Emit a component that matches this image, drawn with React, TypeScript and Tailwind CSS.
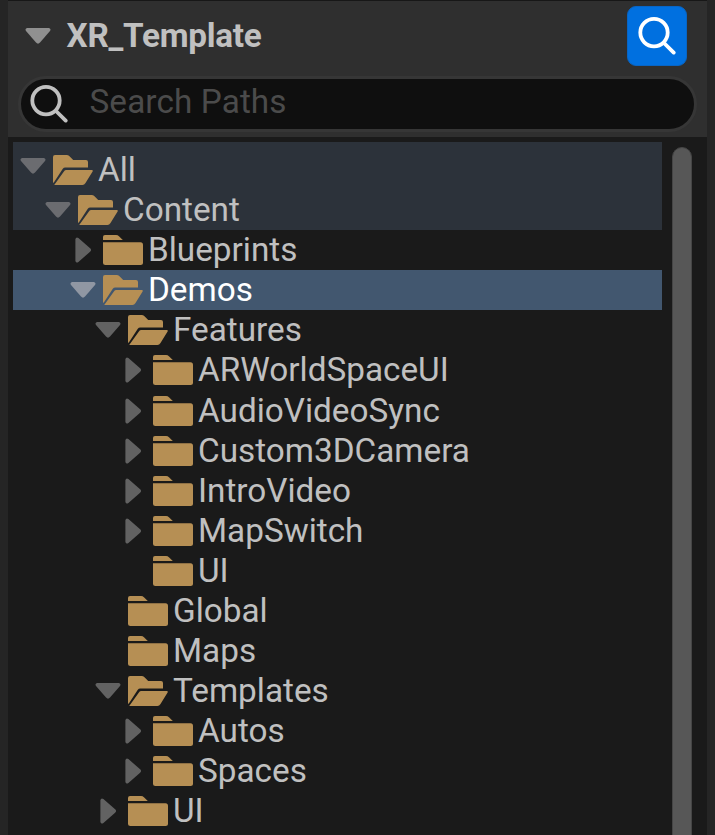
type Kind = 'open' | 'closed' | 'leaf';
type Item = { name: string; level: number; kind: Kind; tone?: 'ancestor' | 'selected'; tall?: boolean };

const items: Item[] = [
  { name: 'All', level: 0, kind: 'open', tone: 'ancestor' },
  { name: 'Content', level: 1, kind: 'open', tone: 'ancestor' },
  { name: 'Blueprints', level: 2, kind: 'closed' },
  { name: 'Demos', level: 2, kind: 'open', tone: 'selected' },
  { name: 'Features', level: 3, kind: 'open' },
  { name: 'ARWorldSpaceUI', level: 4, kind: 'closed' },
  { name: 'AudioVideoSync', level: 4, kind: 'closed', tall: true },
  { name: 'Custom3DCamera', level: 4, kind: 'closed' },
  { name: 'IntroVideo', level: 4, kind: 'closed' },
  { name: 'MapSwitch', level: 4, kind: 'closed' },
  { name: 'UI', level: 4, kind: 'leaf' },
  { name: 'Global', level: 3, kind: 'leaf' },
  { name: 'Maps', level: 3, kind: 'leaf' },
  { name: 'Templates', level: 3, kind: 'open' },
  { name: 'Autos', level: 4, kind: 'closed' },
  { name: 'Spaces', level: 4, kind: 'closed' },
  { name: 'UI', level: 3, kind: 'closed' },
];

function Down({ className }: { className: string }) {
  return (
    <svg className={`h-4 w-[26px] shrink-0 ${className}`} viewBox="0 0 26 16" fill="currentColor">
      <path d="M2 0H24Q26.4 .8 25 3L15 14.5Q13 16.8 11 14.5L1 3Q-.4 .8 2 0Z" />
    </svg>
  );
}

function Right({ className }: { className: string }) {
  return (
    <svg className={`h-[26px] w-4 shrink-0 ${className}`} viewBox="0 0 16 26" fill="currentColor">
      <path d="M.4 2Q1.2-.4 3.4 1L15.1 11.3Q17.1 13 15.1 14.7L3.4 25Q1.2 26.4 .4 24Z" />
    </svg>
  );
}

function Folder({ open }: { open: boolean }) {
  return (
    <svg className="h-[30px] w-10 shrink-0 text-[#b68f54]" viewBox="0 0 40 30" fill="currentColor">
      {open ? (
        <>
          <path d="M0 2Q0 0 2 0H13.5Q15.2 0 16.5 1.3L20.2 5H33Q35 5 35 7V12.4H12.2Q10.7 12.4 9.8 13.7L.5 28Q0 27.5 0 26.5Z" />
          <path d="M13.4 15H38.8Q40.3 15 39.6 16.6L32.5 28Q31.3 30 29.5 30H1.2L10.9 16.4Q11.8 15 13.4 15Z" />
        </>
      ) : (
        <>
          <path d="M0 5V2Q0 0 2 0H13Q14.8 0 16.2 1.4L19.8 5Z" />
          <path d="M0 7.2H37.5Q40 7.2 40 9.7V27.5Q40 30 37.5 30H2.5Q0 30 0 27.5Z" />
        </>
      )}
    </svg>
  );
}

function Magnifier() {
  return (
    <svg className="h-[38px] w-[38px] shrink-0" viewBox="0 0 38 38" fill="none" stroke="currentColor" strokeWidth="3.8" strokeLinecap="round">
      <circle cx="16" cy="15.6" r="13.7" />
      <path d="M26 26L35.7 35.6" />
    </svg>
  );
}

function Row({ item }: { item: Item }) {
  const root = item.level === 0;
  const bg = item.tone === 'ancestor' ? 'bg-[#2c323a]' : item.tone === 'selected' ? 'bg-[#42576f]' : '';
  const arrow = item.tone === 'ancestor' ? 'text-[#6b6c70]' : item.tone === 'selected' ? 'text-[#9097a3]' : 'text-[#626262]';
  const color = item.tone === 'selected' ? 'text-white' : 'text-[#c0c0c0]';
  return (
    <div className={`flex shrink-0 items-center ${root ? 'h-12 pt-2' : item.tall ? 'h-[41px]' : 'h-10'} ${bg}`} style={{ paddingLeft: 7 + item.level * 25 }}>
      <div className={`mr-[7px] flex w-[26px] shrink-0 justify-center ${root ? 'mb-2' : ''}`}>
        {item.kind === 'open' && <Down className={arrow} />}
        {item.kind === 'closed' && <Right className={arrow} />}
      </div>
      <Folder open={item.kind === 'open'} />
      <span className={`pl-[5px] leading-10 ${color}`}>{item.name}</span>
    </div>
  );
}

export default function App() {
  return (
    <main className="flex h-[835px] w-[715px] flex-col overflow-hidden bg-[#252525] px-2 font-['Roboto',sans-serif] text-[33.3px] text-[#c0c0c0]">
      <header className="h-[137px] shrink-0 border-t border-[#171717] bg-[#2f2f2f] px-[10px]">
        <div className="flex h-[75px] items-center pb-[5px]">
          <div className="flex w-[48.5px] pl-[7px]">
            <Down className="text-[#909090]" />
          </div>
          <h1 className="leading-10 font-bold tracking-[-0.25px]">XR_Template</h1>
          <button className="mr-[10px] ml-auto flex h-[60px] w-[60px] items-center justify-center rounded-[9px] border border-[#0865c5] bg-[#0070e0] text-white">
            <Magnifier />
          </button>
        </div>
        <div className="flex h-14 items-center rounded-full border-[3px] border-[#363636] bg-[#0f0f0f] pl-[9px]">
          <Magnifier />
          <span className="pb-1 pl-[21.5px] leading-10 tracking-[0.1px] text-[#4b4b4b]">Search Paths</span>
        </div>
      </header>
      <section className="flex min-h-0 grow bg-[#1a1a1a] pt-[5px] pl-[5px]">
        <div className="flex w-[649px] flex-col">
          {items.map((item, i) => (
            <Row key={i} item={item} />
          ))}
        </div>
        <div className="mt-[5px] ml-[10px] h-[720px] w-5 shrink-0 rounded-full border border-[#454545] bg-[#575757]" />
      </section>
    </main>
  );
}
